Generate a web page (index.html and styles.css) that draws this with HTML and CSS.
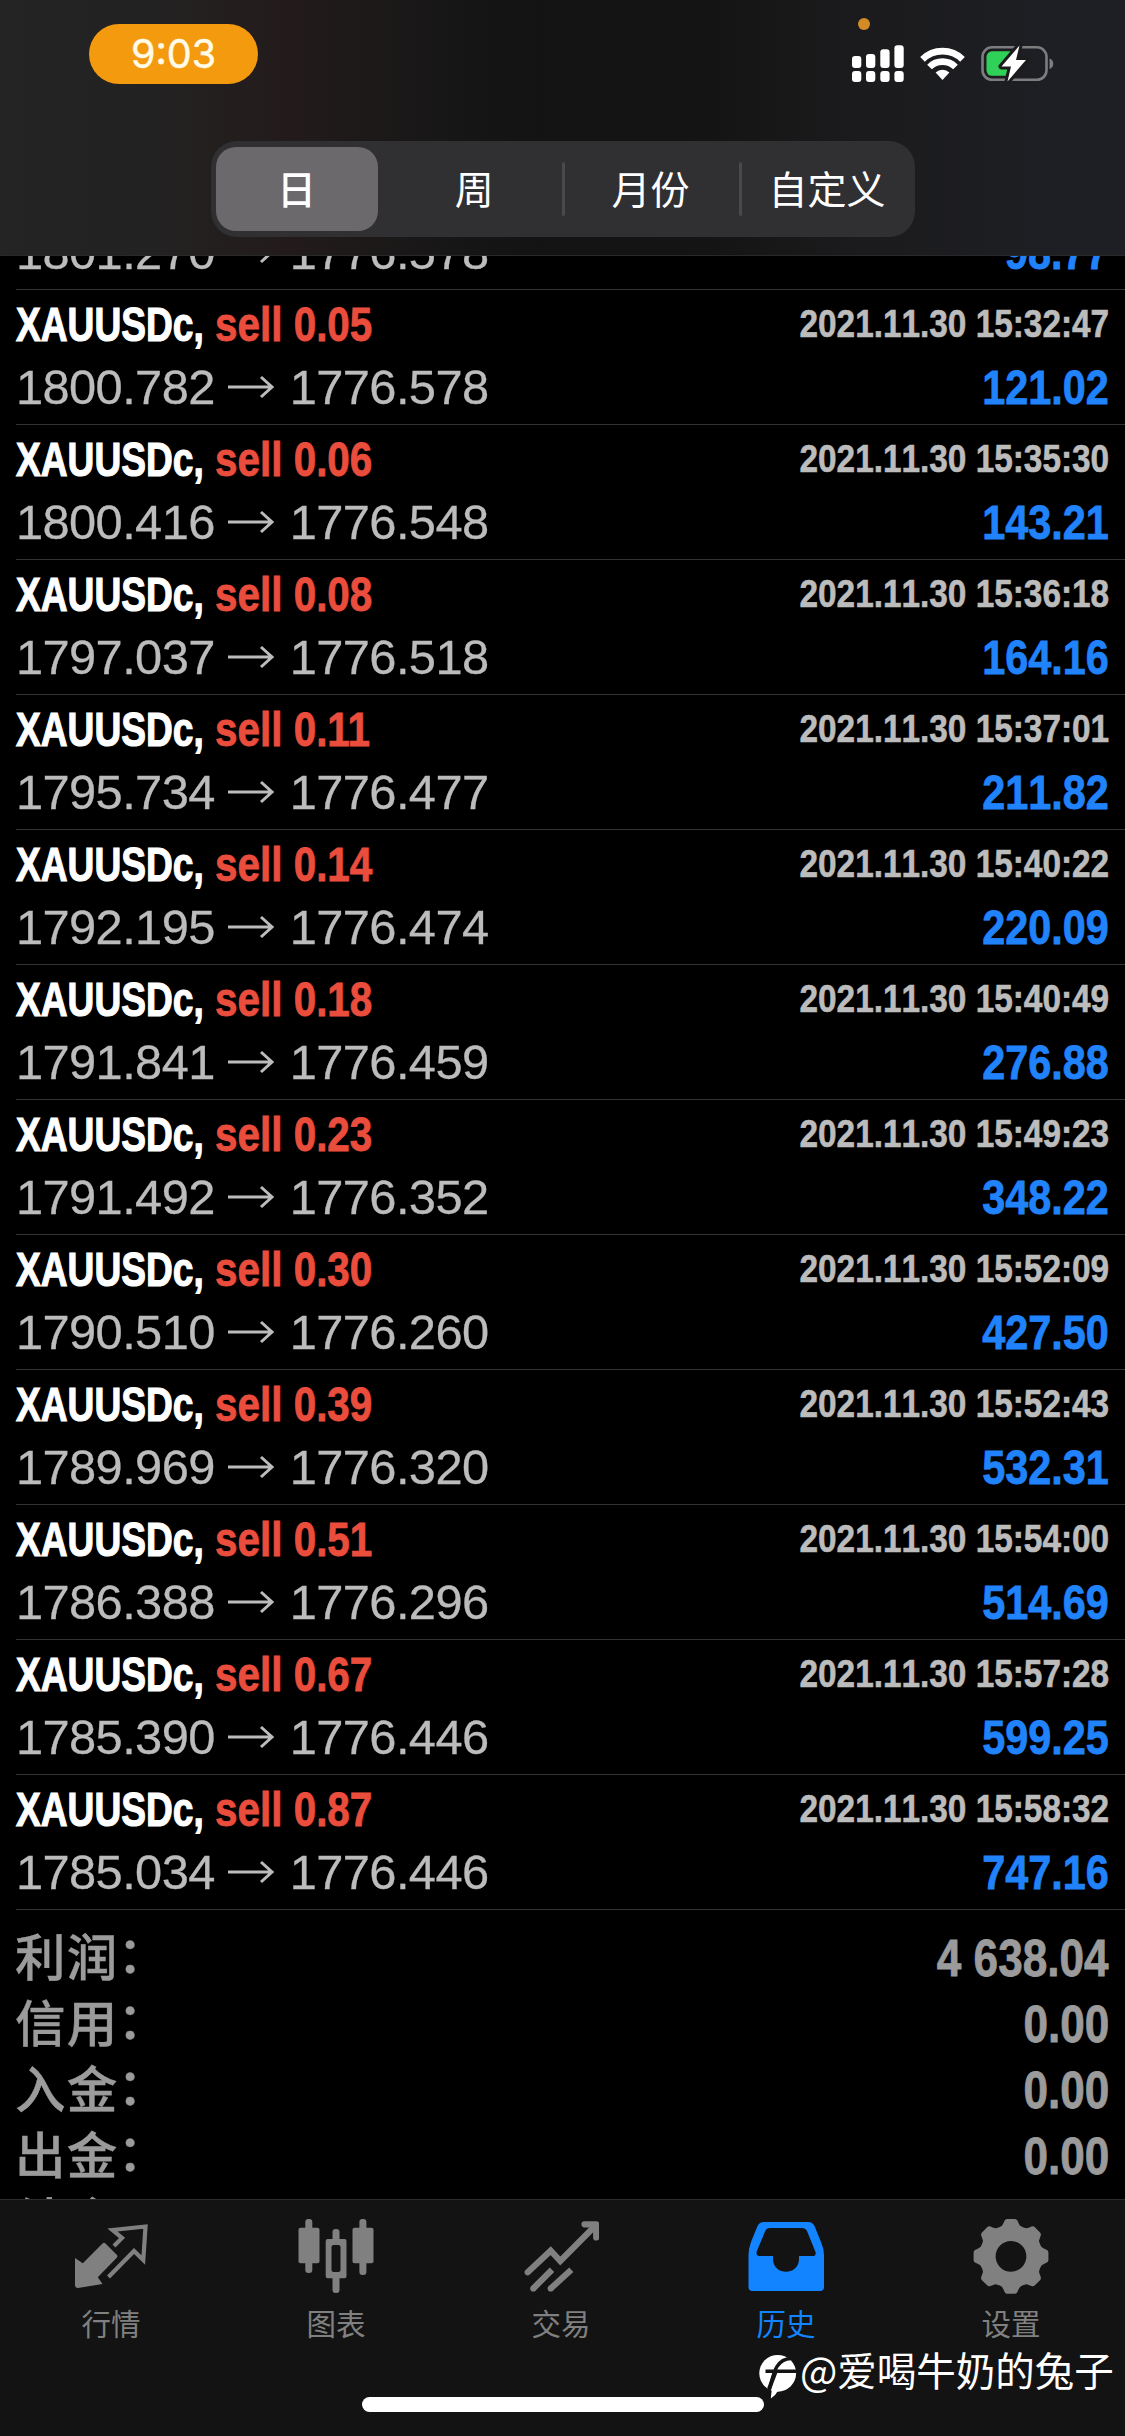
FILE: index.html
```html
<!DOCTYPE html>
<html lang="zh-CN">
<head>
<meta charset="utf-8">
<title>历史</title>
<link rel="stylesheet" href="styles.css">
</head>
<body>
<div class="screen">
  <header class="top">
    <div class="status">
      <div class="clock">9:03</div>
      <svg class="status-icons" width="210" height="80" viewBox="850 10 210 80">
        <circle cx="864" cy="24" r="6" fill="#d38b25"/>
        <g fill="#fff">
          <rect x="852" y="56" width="9.3" height="12" rx="3"/><rect x="866" y="54" width="9.3" height="14" rx="3"/>
          <rect x="880.3" y="49.3" width="9.3" height="18.7" rx="3"/><rect x="894.4" y="45.3" width="9.3" height="22.7" rx="3"/>
          <rect x="852" y="71" width="9.3" height="11" rx="3"/><rect x="866" y="71" width="9.3" height="11" rx="3"/>
          <rect x="880.3" y="71" width="9.3" height="11" rx="3"/><rect x="894.4" y="71" width="9.3" height="11" rx="3"/>
        </g>
        <g fill="none" stroke="#fff" stroke-width="6.6">
          <path d="M922.5 59.3A28.5 28.5 0 0 1 962.5 59.3"/>
          <path d="M929.5 67A18.5 18.5 0 0 1 955.5 67"/>
        </g>
        <path d="M942.5 80L935.6 72.6A10 10 0 0 1 949.4 72.6Z" fill="#fff"/>
        <rect x="982.5" y="47.3" width="64" height="32.5" rx="9.5" fill="none" stroke="#7d7d7f" stroke-width="2.6"/>
        <path d="M1049.5 58.5C1054.5 60 1054.5 67.5 1049.5 69Z" fill="#7d7d7f"/>
        <rect x="986.5" y="51.3" width="28" height="24.5" rx="5.5" fill="#30d158"/>
        <path d="M1019.5 45.5L1001.5 66.5H1011L1007.5 81.5L1026 60H1016Z" fill="#fff" stroke="#1c1c1e" stroke-width="6" paint-order="stroke" stroke-linejoin="round"/>
      </svg>
    </div>
    <nav class="segments">
      <span class="seg seg-on">日</span><span class="seg">周</span><span class="seg ruled">月份</span><span class="seg ruled">自定义</span>
    </nav>
  </header>
  <main class="history">
    <div class="deals" id="deals"></div>
    <div class="totals">
      <div class="total"><span>利润<i>：</i></span><b>4 638.04</b></div>
      <div class="total"><span>信用<i>：</i></span><b>0.00</b></div>
      <div class="total"><span>入金<i>：</i></span><b>0.00</b></div>
      <div class="total"><span>出金<i>：</i></span><b>0.00</b></div>
      <div class="total"><span>结余<i>：</i></span></div>
    </div>
  </main>
  <footer class="tabs">
    <div class="tab">
      <svg width="76" height="80" viewBox="0 0 76 80"><path d="M2 43L9.8 48.3L29.5 28.5Q31 27 32.5 28.5L44 40Q45 41.3 44 42.5L24.8 62.3L29.5 69L5 73Q2 73 2 70Z" fill="currentColor"/><path d="M41 31L49 23L39.5 15L72.5 11.5L70.3 45L61 36L35.5 62" fill="none" stroke="currentColor" stroke-width="4.2"/></svg>
      <span>行情</span>
    </div>
    <div class="tab">
      <svg width="76" height="80" viewBox="0 0 76 80" fill="currentColor"><rect x=".5" y="12.7" width="21" height="35.5" rx="2"/><rect x="7.3" y="4" width="7" height="54" rx="3"/><rect x="54.5" y="12.7" width="21" height="35.5" rx="2"/><rect x="61.4" y="4" width="7" height="56" rx="3"/><rect x="34.5" y="14" width="7" height="13" rx="3"/><rect x="34.5" y="60" width="7" height="18" rx="3"/><path fill-rule="evenodd" d="M29.7 24H46.5Q48.5 24 48.5 26V61.3Q48.5 63.3 46.5 63.3H29.7Q27.7 63.3 27.7 61.3V26Q27.7 24 29.7 24ZM35.5 30Q33.5 30 33.5 32V55Q33.5 57 35.5 57H40.5Q42.5 57 42.5 55V32Q42.5 30 40.5 30Z"/></svg>
      <span>图表</span>
    </div>
    <div class="tab">
      <svg width="76" height="80" viewBox="0 0 76 80" fill="none" stroke="currentColor" stroke-width="6.2"><path d="M4.7 57.3L27.7 35.7L37.3 46L72 11" stroke-linecap="round"/><path d="M61.5 9.3H73.2V22.5" stroke-linecap="round" stroke-linejoin="round"/><path d="M10.3 73.5L29 54.8M27.7 73.5L48.3 54.8"/><g fill="currentColor" stroke="none"><circle cx="10.3" cy="73.5" r="3.1"/><circle cx="27.7" cy="73.5" r="3.1"/></g></svg>
      <span>交易</span>
    </div>
    <div class="tab tab-on">
      <svg width="76" height="80" viewBox="0 0 76 80"><path fill="currentColor" fill-rule="evenodd" d="M16 7H60Q64.5 7 66.5 11L73 27Q76 34 76 40V72Q76 76 72 76H4.5Q.5 76 .5 72V40Q.5 34 3 27L9.5 11Q11.5 7 16 7ZM22 13Q18.5 13 17.2 16L8.5 37Q8 41 11.5 41H25V44C25 61 51 61 51 44V41H64.5Q68.5 41 67.5 37L59 16Q57.5 13 54 13Z"/></svg>
      <span>历史</span>
    </div>
    <div class="tab">
      <svg width="76" height="80" viewBox="0 0 76 80">
        <defs><path id="tooth" d="M27 12Q29.5 11 30.5 8L31.5 5.8Q32.3 3.9 34 3.9H42Q43.7 3.9 44.5 5.8L45.5 8Q46.5 11 49 12L46 20H30Z"/></defs>
        <g fill="currentColor">
          <use href="#tooth"/><use href="#tooth" transform="rotate(45 38 41.3)"/><use href="#tooth" transform="rotate(90 38 41.3)"/><use href="#tooth" transform="rotate(135 38 41.3)"/><use href="#tooth" transform="rotate(180 38 41.3)"/><use href="#tooth" transform="rotate(225 38 41.3)"/><use href="#tooth" transform="rotate(270 38 41.3)"/><use href="#tooth" transform="rotate(315 38 41.3)"/>
        </g>
        <circle cx="38" cy="41.3" r="23.4" fill="none" stroke="currentColor" stroke-width="16"/></svg>
      <span>设置</span>
    </div>
  </footer>
  <div class="home-bar"></div>
  <div class="watermark">
    <svg width="40" height="46" viewBox="0 0 40 46"><circle cx="19.7" cy="20.3" r="18.4" fill="#fff"/><path d="M14 34L12.8 45.5Q18 42 19.5 38.5L30 34Z" fill="#fff"/><path d="M10 40C15 30 14 6 33 5.5M7.5 18.3H38.5" fill="none" stroke="#131313" stroke-width="3.4"/><path d="M11 36L17.5 19" stroke="#131313" stroke-width="4"/></svg>
    <span>@爱喝牛奶的兔子</span>
  </div>
</div>
<script src="deals.js"></script>
</body>
</html>
```
FILE: styles.css
```css
* { box-sizing: border-box; }
body { margin: 0; background: #000; font-family: "Liberation Sans", "Noto Sans CJK SC", sans-serif; }
.screen { position: relative; width: 1125px; height: 2436px; overflow: hidden; display: flex; flex-direction: column; background: #000; }

.top { height: 256px; flex: none; position: relative; z-index: 1; border-bottom: 1px solid #292929; background: linear-gradient(90deg, #242424 0, #232222 150px, #231b1b 290px, #1a1818 400px, #131314 540px, #141414 700px, #1b1b1d 860px, #1e1f24 1060px, #1e1f24 100%); }
.status { height: 141px; display: flex; justify-content: space-between; padding: 10px 65px 0 89px; }
.clock { width: 169px; height: 60px; margin-top: 14px; border-radius: 30px; background: #f39a0f; color: #fffbe8; font: 400 39.5px/61px Inter, sans-serif; -webkit-text-stroke: .5px #fffbe8; text-align: center; }
.segments { width: 704px; height: 96px; margin-left: 210.5px; padding: 6px 0 6px 5px; border-radius: 26px; background: #303033; display: flex; color: #fff; font: 400 39px/80px "Noto Sans CJK SC", sans-serif; }
.seg { flex: 0 0 176.4px; text-align: center; position: relative; }
.seg-on { flex: 0 0 162px; margin-right: 8.5px; border-radius: 20px; background: #6c696d; font-weight: 500; }
.ruled::before { content: ""; position: absolute; left: 0; top: 15px; width: 3px; height: 54px; border-radius: 2px; background: #49494c; }

.history { height: 1943px; flex: none; overflow: hidden; }
.deals { margin-top: -33px; }
.deal { height: 135px; margin-left: 16px; padding-right: 16px; border-bottom: 1px solid #343434; white-space: nowrap; }
.deal-partial { height: 67px; }
.line { display: flex; justify-content: space-between; }
.head { height: 68px; padding-top: 2px; font-weight: 700; font-size: 49px; line-height: 64px; }
.symbol, .side { display: inline-block; transform-origin: 0 50%; }
.symbol { width: 199px; color: #fff; transform: scaleX(.758); -webkit-text-stroke: 1.2px #fff; }
.side { color: #eb4d3d; transform: scaleX(.825); -webkit-text-stroke: .8px #eb4d3d; }
.time { font-size: 39px; line-height: 64px; color: #bcbcbc; font-kerning: none; transform: scaleX(.855); transform-origin: 100% 50%; -webkit-text-stroke: .6px #bcbcbc; }
.price { height: 66px; font-size: 48.8px; line-height: 58px; color: #bcbcbc; }
.route { display: flex; align-items: center; height: 58px; letter-spacing: -.6px; -webkit-text-stroke: .3px #bcbcbc; }
.route svg { margin: 0 15px 0 12px; }
.profit { font-weight: 700; font-size: 49px; color: #2083fb; font-kerning: none; transform: scaleX(.845); transform-origin: 100% 50%; -webkit-text-stroke: .8px #2083fb; }

.totals { padding: 13px 16px 0; }
.total { height: 66px; display: flex; justify-content: space-between; white-space: nowrap; color: #9b9b9b; line-height: 66px; }
.total span { font: 500 50.5px/62px "Noto Sans CJK SC", sans-serif; letter-spacing: 1.2px; margin-left: -1px; -webkit-text-stroke: .4px #9b9b9b; }
.total i { font-style: normal; position: relative; left: -1px; top: -3px; }
.total b { font-size: 51px; line-height: 72px; transform: scaleX(.865); transform-origin: 100% 50%; -webkit-text-stroke: .8px #9b9b9b; }

.tabs { flex: 1; display: flex; position: relative; z-index: 1; background: #131313; border-top: 1px solid #2c2c2c; padding-top: 15px; }
.tab { flex: 0 0 225px; display: flex; flex-direction: column; align-items: center; padding-right: 3px; color: #808080; font: 400 29.5px/44px "Noto Sans CJK SC", sans-serif; }
.tab span { margin-top: 5px; }
.tab-on { color: #1284ff; }
.home-bar { position: absolute; z-index: 2; left: 362px; top: 2397px; width: 402px; height: 15px; border-radius: 8px; background: #fff; }
.watermark { position: absolute; z-index: 3; left: 758px; top: 2338px; display: flex; align-items: center; color: #fff; font: 400 39.5px/58px "Noto Sans CJK SC", sans-serif; white-space: nowrap; }
.watermark svg { margin: 15px 2px 0 0; }
```
FILE: deals.js
```js
const deals = [
  ["0.05", "1800.782", "1776.578", "15:32:47", "121.02"],
  ["0.06", "1800.416", "1776.548", "15:35:30", "143.21"],
  ["0.08", "1797.037", "1776.518", "15:36:18", "164.16"],
  ["0.11", "1795.734", "1776.477", "15:37:01", "211.82"],
  ["0.14", "1792.195", "1776.474", "15:40:22", "220.09"],
  ["0.18", "1791.841", "1776.459", "15:40:49", "276.88"],
  ["0.23", "1791.492", "1776.352", "15:49:23", "348.22"],
  ["0.30", "1790.510", "1776.260", "15:52:09", "427.50"],
  ["0.39", "1789.969", "1776.320", "15:52:43", "532.31"],
  ["0.51", "1786.388", "1776.296", "15:54:00", "514.69"],
  ["0.67", "1785.390", "1776.446", "15:57:28", "599.25"],
  ["0.87", "1785.034", "1776.446", "15:58:32", "747.16"]
];
const priceLine = (open, close, profit) => `
    <div class="line price"><div class="route">${open}<svg width="48" height="24" viewBox="0 0 48 24" fill="none" stroke="currentColor" stroke-width="3"><path d="M1 12H45M34 2L45 12L34 22"/></svg>${close}</div><span class="profit">${profit}</span></div>`;
document.getElementById("deals").innerHTML =
  `<div class="deal deal-partial">${priceLine("1801.270", "1776.578", "98.77")}</div>` +
  deals.map(([lot, open, close, time, profit]) => `
  <div class="deal">
    <div class="line head"><div><span class="symbol">XAUUSDc,</span><span class="side">sell ${lot}</span></div><span class="time">2021.11.30 ${time}</span></div>
    ${priceLine(open, close, profit)}
  </div>`).join("");
```
